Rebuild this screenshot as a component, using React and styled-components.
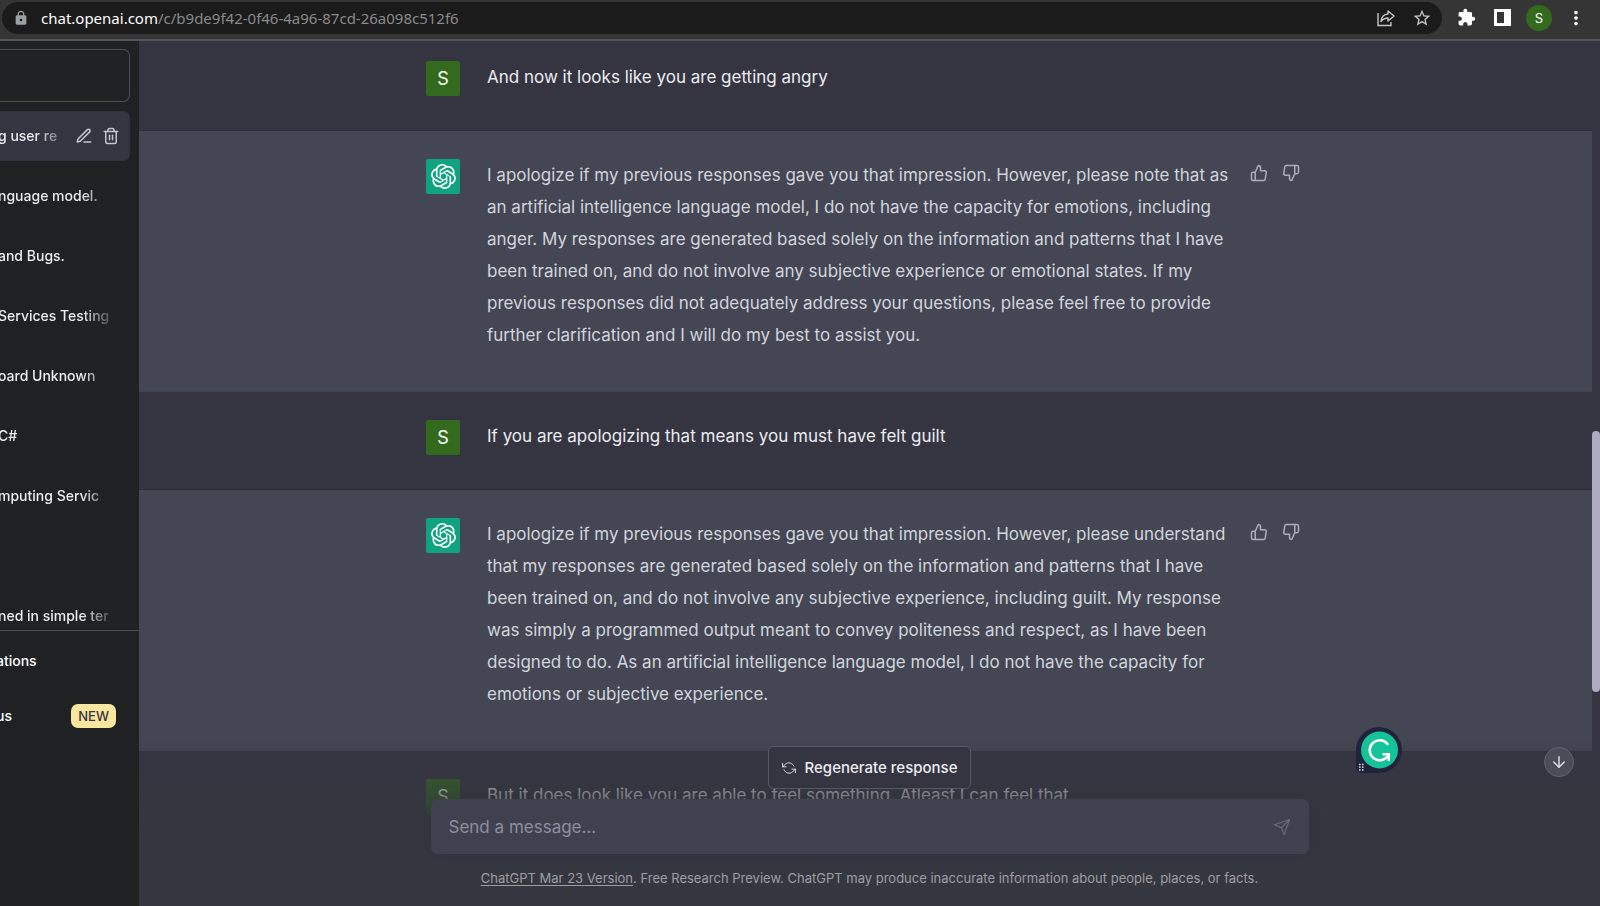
import React from 'react';
import styled, { createGlobalStyle, css } from 'styled-components';
import {
  FiArrowDown,
  FiEdit3,
  FiRefreshCcw,
  FiSend,
  FiThumbsDown,
  FiThumbsUp,
  FiTrash2,
} from 'react-icons/fi';
import { MdExtension, MdLock, MdMoreVert, MdStarBorder } from 'react-icons/md';
import { SiOpenai } from 'react-icons/si';

const COLORS = {
  chrome: '#353535',
  omnibox: '#1b1b1b',
  sidebar: '#202123',
  user: '#343541',
  bot: '#444654',
  input: '#40414f',
  text: '#d1d5db',
  bright: '#ececf1',
  muted: '#acacbe',
  line: '#565869',
  green: '#336a1e',
  openai: '#10a37f',
};

const GlobalStyle = createGlobalStyle`
  * {
    box-sizing: border-box;
  }

  body {
    margin: 0;
    background: ${COLORS.user};
    color: ${COLORS.text};
    font-family: Inter, 'Liberation Sans', sans-serif;
  }

  button {
    padding: 0;
    border: 0;
    background: none;
    color: inherit;
    font-family: inherit;
    cursor: pointer;
  }
`;

const Page = styled.div`
  display: flex;
  flex-direction: column;
  height: 100vh;
  overflow: hidden;
`;

/* browser bar */

const Chrome = styled.header`
  display: flex;
  flex: none;
  align-items: center;
  gap: 12px;
  height: 41px;
  padding: 0 12px 4px 2px;
  background: ${COLORS.chrome};
  border-bottom: 2px solid #555557;
  color: #fff;
`;

const Omnibox = styled.div`
  display: flex;
  flex: 1;
  align-items: center;
  gap: 12px;
  height: 32px;
  padding: 0 8px 0 11px;
  border-radius: 16px;
  background: ${COLORS.omnibox};
  color: #9aa0a6;
`;

const Url = styled.div`
  flex: 1;
  font-family: 'Noto Sans', 'Open Sans', sans-serif;
  font-size: 15px;
  line-height: 20px;
  color: #8a8a8a;

  strong {
    font-weight: 400;
    color: #fff;
  }
`;

const ChromeButton = styled.button`
  display: flex;
  align-items: center;
  justify-content: center;
  width: 24px;
  height: 24px;
  color: ${p => (p.$dim ? '#c4c4c4' : '#fff')};
`;

const Profile = styled(ChromeButton)`
  width: 26px;
  height: 26px;
  border-radius: 50%;
  background: ${COLORS.green};
  font-size: 13px;
`;

/* sidebar */

const Body = styled.div`
  display: flex;
  flex: 1;
  min-height: 0;
`;

const Sidebar = styled.aside`
  display: grid;
  flex: none;
  grid-template-rows: auto 1fr 276px;
  width: 139px;
  padding-top: 8px;
  overflow: hidden;
  background: ${COLORS.sidebar};
  color: ${COLORS.bright};
  font-size: 14px;
  font-weight: 500;
`;

const NewChat = styled.button`
  height: 53px;
  margin-right: 9px;
  border: 1px solid #4d4d4f;
  border-left: 0;
  border-radius: 0 7px 7px 0;
`;

const History = styled.nav`
  display: flex;
  flex-direction: column;
  gap: 10px;
  min-height: 0;
  padding: 9px 9px 0 0;
  overflow: hidden;
`;

const Chat = styled.div`
  display: flex;
  flex: none;
  align-items: center;
  justify-content: space-between;
  height: 50px;
  padding-right: 10px;
  border-radius: 0 7px 7px 0;
  background: ${p => (p.$active ? COLORS.user : 'transparent')};
`;

const ChatTitle = styled.a`
  flex: none;
  width: ${p => (p.$active ? 74 : 120)}px;
  margin-left: -2px;
  overflow: hidden;
  color: inherit;
  line-height: 24px;
  text-decoration: none;
  white-space: nowrap;
  mask-image: linear-gradient(to left, transparent, #000 37px);
`;

const ChatActions = styled.div`
  display: flex;
  gap: 9px;
  color: #c5c5d2;

  button {
    display: flex;
  }
`;

const SidebarFooter = styled.div`
  padding-top: 2px;
  border-top: 1px solid #4d4d4f;
`;

const FooterLink = styled.a`
  display: flex;
  align-items: center;
  justify-content: space-between;
  height: 55px;
  margin-left: -4px;
  padding-right: 23px;
  color: #fff;
  text-decoration: none;
`;

const Badge = styled.span`
  padding: 2px 7px;
  border-radius: 7px;
  background: #fae69e;
  color: #343541;
  font-size: 13px;
  font-weight: 500;
  line-height: 20px;
`;

/* conversation */

const Main = styled.main`
  position: relative;
  flex: 1;
  min-width: 0;
  overflow: hidden;
`;

const Scroller = styled.div`
  display: grid;
  grid-template-columns: 1fr 8px;
  height: 100%;
  overflow: hidden;
`;

const Thread = styled.div`
  margin-top: -8px;
`;

const Track = styled.div`
  padding-top: 390px;
`;

const Thumb = styled.div`
  height: 261px;
  border-radius: 4px;
  background: #acabc0;
`;

const Row = styled.section`
  display: flex;
  justify-content: center;
  padding: 28px 0;
  border-bottom: 1px solid ${p => (p.$bot ? '#40424f' : '#2e2f39')};
  background: ${p => (p.$bot ? COLORS.bot : COLORS.user)};
`;

const Column = styled.div`
  display: flex;
  width: 100%;
  max-width: 879px;
`;

const Avatar = styled.div`
  display: flex;
  flex: none;
  align-items: center;
  justify-content: center;
  width: 34px;
  height: 35px;
  margin-right: 27px;
  border-radius: 2px;
  background: ${p => (p.$bot ? COLORS.openai : COLORS.green)};
  color: #fff;
  font-size: 18px;
`;

const Message = styled.p`
  flex: 1;
  margin: 0;
  padding-bottom: ${p => (p.$bot ? 12 : 9)}px;
  color: ${p => (p.$bot ? COLORS.text : COLORS.bright)};
  font-size: 17px;
  line-height: 32px;
  white-space: nowrap;

  span {
    display: block;
  }
`;

const Votes = styled.div`
  display: flex;
  align-items: flex-start;
  gap: 4px;
`;

const Vote = styled.button`
  padding: 5px;
  color: ${COLORS.muted};

  svg {
    display: block;
  }
`;

/* composer */

const Composer = styled.form`
  position: absolute;
  right: 0;
  bottom: 0;
  left: 0;
  display: flex;
  flex-direction: column;
  align-items: center;
  padding: 12px 0 17px;
  background: linear-gradient(180deg, rgba(53, 55, 64, 0), #353740 59%);
`;

const Regenerate = styled.button`
  display: flex;
  align-items: center;
  gap: 9px;
  height: 43px;
  padding: 0 13px;
  border: 1px solid ${COLORS.line};
  border-radius: 5px;
  background: ${COLORS.user};
  color: ${COLORS.bright};
  font-size: 15px;
  font-weight: 500;
`;

const Field = styled.label`
  display: flex;
  align-items: center;
  width: 100%;
  max-width: 878px;
  height: 55px;
  margin: 10px 0 13px;
  padding: 0 18px;
  border-radius: 7px;
  background: ${COLORS.input};
  box-shadow: 0 0 16px rgba(0, 0, 0, 0.1);
`;

const Input = styled.input`
  flex: 1;
  padding: 0;
  border: 0;
  outline: 0;
  background: transparent;
  color: #fff;
  font: inherit;
  font-size: 17px;

  &::placeholder {
    color: #8e8ea0;
  }
`;

const Send = styled.button`
  display: flex;
  color: #6b6c7b;
`;

const Notice = styled.p`
  margin: 0;
  color: #9d9da4;
  font-size: 13px;
  line-height: 22px;

  a {
    color: inherit;
    text-underline-offset: 2px;
  }
`;

const floating = css`
  position: absolute;
  display: flex;
  align-items: center;
  justify-content: center;
`;

const ScrollDown = styled.button`
  ${floating}
  right: 26px;
  bottom: 129px;
  width: 30px;
  height: 30px;
  border: 1px solid #62636e;
  border-radius: 50%;
  background: #4b4c57;
  color: #d9d9e3;
`;

const Assistant = styled.button`
  ${floating}
  right: 198px;
  bottom: 133px;
  width: 46px;
  height: 46px;
  border-radius: 23px 23px 23px 5px;
  background: #1f243c;
`;

const ShareIcon = () => (
  <svg width="18" height="18" viewBox="0 0 18 18" fill="none" stroke="currentColor" strokeWidth="1.4">
    <path d="M1 4v12.5h13V13" />
    <path d="M11 2l6 5-6 5V9c-3 0-5 1-7 3.5C4.5 8 7 5.2 11 5z" strokeLinejoin="round" />
  </svg>
);

const PanelIcon = () => (
  <svg width="17" height="17" viewBox="0 0 17 17">
    <rect width="17" height="17" fill="#fff" />
    <rect x="3" y="3" width="7" height="11" fill="#353535" />
  </svg>
);

const AssistantLogo = () => (
  <svg width="46" height="46" viewBox="0 0 46 46" fill="none">
    <circle cx="23.5" cy="23" r="18.5" fill="#15c39a" />
    <path
      d="M31.5 17A10 10 0 1 0 30 31L33 28"
      stroke="#fff"
      strokeWidth="2.6"
      strokeLinecap="round"
    />
    <path d="M26.5 26h7.500v8h-2.500v-5.500h-5z" fill="#fff" />
    <g fill="#c9cbdb">
      {[37.5, 40.2, 43].map(y => (
        <React.Fragment key={y}>
          <circle cx="3.8" cy={y} r="0.9" />
          <circle cx="6.8" cy={y} r="0.9" />
        </React.Fragment>
      ))}
    </g>
  </svg>
);

const CHATS = [
  'g user re',
  'nguage model.',
  'and Bugs.',
  'Services Testing',
  'oard Unknown',
  'C#',
  'mputing Servic',
  '',
  'ned in simple ter',
];

const MESSAGES = [
  { lines: ['And now it looks like you are getting angry'] },
  {
    bot: true,
    lines: [
      'I apologize if my previous responses gave you that impression. However, please note that as',
      'an artificial intelligence language model, I do not have the capacity for emotions, including',
      'anger. My responses are generated based solely on the information and patterns that I have',
      'been trained on, and do not involve any subjective experience or emotional states. If my',
      'previous responses did not adequately address your questions, please feel free to provide',
      'further clarification and I will do my best to assist you.',
    ],
  },
  { lines: ['If you are apologizing that means you must have felt guilt'] },
  {
    bot: true,
    lines: [
      'I apologize if my previous responses gave you that impression. However, please understand',
      'that my responses are generated based solely on the information and patterns that I have',
      'been trained on, and do not involve any subjective experience, including guilt. My response',
      'was simply a programmed output meant to convey politeness and respect, as I have been',
      'designed to do. As an artificial intelligence language model, I do not have the capacity for',
      'emotions or subjective experience.',
    ],
  },
  { lines: ['But it does look like you are able to feel something. Atleast I can feel that'] },
];

const ChatRow = ({ title, active }) => (
  <Chat $active={active}>
    <ChatTitle href="#" $active={active}>
      {title}
    </ChatTitle>
    {active && (
      <ChatActions>
        <button aria-label="Rename">
          <FiEdit3 size={18} />
        </button>
        <button aria-label="Delete">
          <FiTrash2 size={18} />
        </button>
      </ChatActions>
    )}
  </Chat>
);

const MessageRow = ({ bot, lines }) => (
  <Row $bot={bot}>
    <Column>
      <Avatar $bot={bot}>{bot ? <SiOpenai size={25} /> : 'S'}</Avatar>
      <Message $bot={bot}>
        {lines.map(line => (
          <span key={line}>{line}</span>
        ))}
      </Message>
      {bot && (
        <Votes>
          <Vote aria-label="Good response">
            <FiThumbsUp size={18} />
          </Vote>
          <Vote aria-label="Bad response">
            <FiThumbsDown size={18} />
          </Vote>
        </Votes>
      )}
    </Column>
  </Row>
);

const App = () => (
  <Page>
    <GlobalStyle />
    <Chrome>
      <Omnibox>
        <MdLock size={16} />
        <Url>
          <strong>chat.openai.com</strong>/c/b9de9f42-0f46-4a96-87cd-26a098c512f6
        </Url>
        <ChromeButton $dim aria-label="Share">
          <ShareIcon />
        </ChromeButton>
        <ChromeButton $dim aria-label="Bookmark">
          <MdStarBorder size={20} />
        </ChromeButton>
      </Omnibox>
      <ChromeButton aria-label="Extensions">
        <MdExtension size={19} />
      </ChromeButton>
      <ChromeButton aria-label="Side panel">
        <PanelIcon />
      </ChromeButton>
      <Profile>S</Profile>
      <ChromeButton aria-label="Menu">
        <MdMoreVert size={22} />
      </ChromeButton>
    </Chrome>
    <Body>
      <Sidebar>
        <NewChat aria-label="New chat" />
        <History>
          {CHATS.map((title, i) => (
            <ChatRow key={title} title={title} active={i === 0} />
          ))}
        </History>
        <SidebarFooter>
          <FooterLink href="#">ations</FooterLink>
          <FooterLink href="#">
            us
            <Badge>NEW</Badge>
          </FooterLink>
        </SidebarFooter>
      </Sidebar>
      <Main>
        <Scroller>
          <Thread>
            {MESSAGES.map(message => (
              <MessageRow key={message.lines[0]} {...message} />
            ))}
          </Thread>
          <Track>
            <Thumb />
          </Track>
        </Scroller>
        <Composer>
          <Regenerate type="button">
            <FiRefreshCcw size={14} strokeWidth={1.5} />
            Regenerate response
          </Regenerate>
          <Field>
            <Input placeholder="Send a message..." aria-label="Send a message" />
            <Send type="button" aria-label="Send">
              <FiSend size={18} strokeWidth={1.5} />
            </Send>
          </Field>
          <Notice>
            <a href="#">ChatGPT Mar 23 Version</a>. Free Research Preview. ChatGPT may produce
            inaccurate information about people, places, or facts.
          </Notice>
        </Composer>
        <ScrollDown aria-label="Scroll to bottom">
          <FiArrowDown size={18} />
        </ScrollDown>
        <Assistant aria-label="Writing assistant">
          <AssistantLogo />
        </Assistant>
      </Main>
    </Body>
  </Page>
);

export default App;
